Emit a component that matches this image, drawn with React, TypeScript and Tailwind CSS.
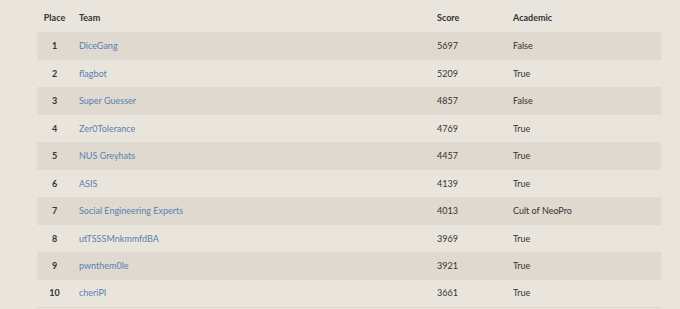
import React from "react";

const rows = [
  [1, "DiceGang", 5697, "False"],
  [2, "flagbot", 5209, "True"],
  [3, "Super Guesser", 4857, "False"],
  [4, "Zer0Tolerance", 4769, "True"],
  [5, "NUS Greyhats", 4457, "True"],
  [6, "ASIS", 4139, "True"],
  [7, "Social Engineering Experts", 4013, "Cult of NeoPro"],
  [8, "utTSSSMnkmmfdBA", 3969, "True"],
  [9, "pwnthem0le", 3921, "True"],
  [10, "cheriPI", 3661, "True"],
] as const;

export default function App() {
  return (
    <div
      className="w-[680px] h-[309px] overflow-hidden bg-[#e9e5dd] text-[#333] text-[9px] pt-[4px] pl-[37px] pr-[19px]"
      style={{ fontFamily: "Lato, 'Open Sans', sans-serif" }}
    >
      <table className="w-full border-collapse">
        <thead>
          <tr className="h-[28px] font-bold">
            <th className="w-[35px] text-center font-bold">Place</th>
            <th className="text-left pl-[7px] font-bold">Team</th>
            <th className="w-[76px] text-left font-bold">Score</th>
            <th className="w-[148px] text-left font-bold">Academic</th>
          </tr>
        </thead>
        <tbody className="border-b border-[#dcd7ce]">
          {rows.map(([p, t, s, a], i) => (
            <tr key={p} className={`h-[27.5px] ${i % 2 === 0 ? "bg-[#dfd9d0]" : ""}`}>
              <td className="text-center font-bold">{p}</td>
              <td className="pl-[7px] text-[#5b80b2]">{t}</td>
              <td>{s}</td>
              <td>{a}</td>
            </tr>
          ))}
        </tbody>
      </table>
    </div>
  );
}
